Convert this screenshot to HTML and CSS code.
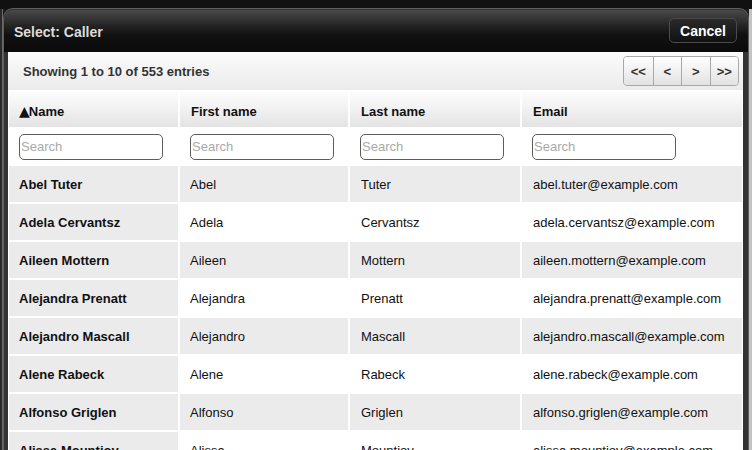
FILE: index.html
```html
<!DOCTYPE html>
<html>
<head>
<meta charset="utf-8">
<link rel="stylesheet" href="styles.css">
</head>
<body>
<div class="dialog">
  <div class="titlebar">
    <span class="title">Select: Caller</span>
    <button class="cancel">Cancel</button>
  </div>
  <div class="content">
    <div class="toolbar">
      <span class="info">Showing 1 to 10 of 553 entries</span>
      <div class="pager">
        <button class="pg">&lt;&lt;</button>
        <button class="pg">&lt;</button>
        <button class="pg">&gt;</button>
        <button class="pg">&gt;&gt;</button>
      </div>
    </div>
    <table class="grid">
      <colgroup>
        <col class="c1"><col class="c2"><col class="c3"><col class="c4">
      </colgroup>
      <thead>
        <tr class="head">
          <th><span class="arrow">▲</span>Name</th>
          <th>First name</th>
          <th>Last name</th>
          <th>Email</th>
        </tr>
        <tr class="search">
          <td><input class="sin" placeholder="Search"></td>
          <td><input class="sin" placeholder="Search"></td>
          <td><input class="sin" placeholder="Search"></td>
          <td><input class="sin" placeholder="Search"></td>
        </tr>
      </thead>
      <tbody>
        <tr class="odd"><td>Abel Tuter</td><td>Abel</td><td>Tuter</td><td>abel.tuter@example.com</td></tr>
        <tr class="even"><td>Adela Cervantsz</td><td>Adela</td><td>Cervantsz</td><td>adela.cervantsz@example.com</td></tr>
        <tr class="odd"><td>Aileen Mottern</td><td>Aileen</td><td>Mottern</td><td>aileen.mottern@example.com</td></tr>
        <tr class="even"><td>Alejandra Prenatt</td><td>Alejandra</td><td>Prenatt</td><td>alejandra.prenatt@example.com</td></tr>
        <tr class="odd"><td>Alejandro Mascall</td><td>Alejandro</td><td>Mascall</td><td>alejandro.mascall@example.com</td></tr>
        <tr class="even"><td>Alene Rabeck</td><td>Alene</td><td>Rabeck</td><td>alene.rabeck@example.com</td></tr>
        <tr class="odd"><td>Alfonso Griglen</td><td>Alfonso</td><td>Griglen</td><td>alfonso.griglen@example.com</td></tr>
        <tr class="even"><td>Alissa Mountjoy</td><td>Alissa</td><td>Mountjoy</td><td>alissa.mountjoy@example.com</td></tr>
      </tbody>
    </table>
  </div>
</div>
</body>
</html>
```
FILE: styles.css
```css
html, body {
  margin: 0;
  padding: 0;
  height: 450px;
  overflow: hidden;
}
body {
  font-family: "Liberation Sans", Arial, sans-serif;
  background:
    linear-gradient(#111 0, #111 9px, transparent 9px),
    linear-gradient(to right, #2a2a2a 0, #2a2a2a 2px, #6a6a6a 2px, #6a6a6a 3px, #1a1a1a 3px, #1a1a1a 749px, #c4c4c4 749px);
  padding-top: 8px;
  box-sizing: border-box;
}
.dialog {
  margin-left: 3px;
  width: 746px;
  height: 460px;
  box-sizing: border-box;
  background: #333;
  border: 1px solid #5e5e5e;
  border-bottom: none;
  border-radius: 10px 10px 0 0;
  padding: 1px 5px 0 4px;
  display: flex;
  flex-direction: column;
}
.titlebar {
  height: 42px;
  margin: 0 -5px 0 -4px;
  padding: 0 11px 0 10px;
  border-radius: 9px 9px 0 0;
  background: linear-gradient(#4a4a4a 0, #262626 35%, #111 60%, #0b0b0b 100%);
  display: flex;
  align-items: center;
  justify-content: space-between;
  flex: none;
}
.title {
  color: #dcdcdc;
  font-weight: bold;
  font-size: 14px;
  position: relative;
  top: 1px;
}
.cancel {
  width: 68px;
  height: 25px;
  margin-top: -1px;
  background: linear-gradient(#2a2a2a, #111);
  border: 1px solid #4a4a4a;
  border-radius: 5px;
  color: #fff;
  font-family: "Liberation Sans", Arial, sans-serif;
  font-weight: bold;
  font-size: 14px;
  padding: 0;
}
.content {
  background: #fff;
  flex: 1;
  overflow: hidden;
}
.toolbar {
  height: 38px;
  display: flex;
  align-items: center;
  justify-content: space-between;
  padding: 0 4px 0 15px;
  background: linear-gradient(#fbfbfb, #ebebeb);
  border-radius: 4px 4px 0 0;
}
.info {
  font-weight: bold;
  font-size: 13px;
  color: #333;
}
.pager {
  display: flex;
  border: 1px solid #a8a8a8;
  border-radius: 4px;
  overflow: hidden;
  height: 28px;
}
.pg {
  box-sizing: border-box;
  width: 28.5px;
  height: 28px;
  padding: 0;
  border: none;
  border-left: 1px solid #a8a8a8;
  background: linear-gradient(#fff, #e2e2e2);
  font-family: "Liberation Sans", Arial, sans-serif;
  font-size: 13px;
  font-weight: bold;
  color: #333;
}
.pg:first-child {
  border-left: none;
}
.grid {
  table-layout: fixed;
  width: 737px;
  margin-left: -1px;
  border-collapse: separate;
  border-spacing: 2px;
  font-size: 13px;
  color: #111;
}
.c1 { width: 169px; }
.c2 { width: 168px; }
.c3 { width: 170px; }
.c4 { width: 220px; }
.grid th, .grid td {
  padding: 0 0 0 10px;
  text-align: left;
  white-space: nowrap;
  overflow: hidden;
}
.grid tbody td:nth-child(n+3) {
  padding-left: 11px;
}
.grid .head th {
  height: 35px;
  padding-top: 3px;
  box-sizing: border-box;
  font-weight: bold;
  background: linear-gradient(#fdfdfd, #e4e4e4);
}
.grid .head th:nth-child(n+2) {
  padding-left: 11px;
}
.arrow {
  font-family: "DejaVu Sans", sans-serif;
  font-size: 14px;
  margin-right: -1px;
}
.search td {
  height: 35px;
  background: #fff;
}
.sin {
  display: block;
  box-sizing: border-box;
  width: 144px;
  height: 26px;
  border: 1px solid #5c5c5c;
  border-radius: 5px;
  padding: 0 1px;
  font-family: "Liberation Sans", Arial, sans-serif;
  font-size: 13px;
  color: #333;
}
.sin::placeholder {
  color: #a9a9a9;
}
tbody td {
  height: 36px;
}
tbody td:first-child {
  font-weight: bold;
  background: #ebebeb;
}
.odd td {
  background: #ebebeb;
}
.even td {
  background: #fff;
}
.even td:first-child {
  background: #ebebeb;
}
```
